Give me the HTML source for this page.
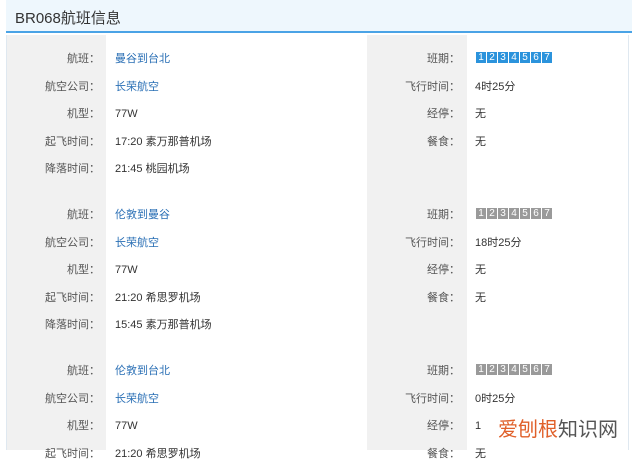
<!DOCTYPE html>
<html><head><meta charset="utf-8"><style>
*{margin:0;padding:0;box-sizing:border-box}
body{width:632px;height:450px;overflow:hidden;background:#fff;font-family:"Liberation Sans","Noto Sans CJK SC",sans-serif;position:relative}
.hd{position:absolute;left:6px;top:0;width:626px;height:33px;background:#eef7fd;border-bottom:2px solid #4aa3e6}
.hd span{position:absolute;left:9px;top:7px;font-size:15px;color:#333}
.box{position:absolute;left:6px;top:35px;width:623px;height:415px;border-left:1px solid #dfe8f0;border-right:1px solid #dfe8f0}
.g1{position:absolute;left:7px;top:35px;width:99px;height:415px;background:#f1f1f1}
.g2{position:absolute;left:367px;top:35px;width:100px;height:415px;background:#f1f1f1}
.l{position:absolute;font-size:11px;color:#555;text-align:right;width:90px;line-height:14px;margin-top:1px}
.v{position:absolute;font-size:11px;color:#333;line-height:14px;white-space:nowrap;margin-top:1px}
.b{color:#2a6fb5}
.d{position:absolute;display:flex;gap:1px}
.d i{font-style:normal;width:10px;height:11px;font-size:10px;line-height:11px;color:#fff;text-align:center}
.bl i{background:#2b93dc}.gr i{background:#9a9a9a}
.wm{position:absolute;left:498px;top:418px;font-size:20px;line-height:24px;white-space:nowrap}
</style></head><body>
<div class="hd"><span>BR068航班信息</span></div>
<div class="box"></div><div class="g1"></div><div class="g2"></div>

<div class="l" style="left:10px;top:51px">航班：</div><div class="v b" style="left:115px;top:51px">曼谷到台北</div>
<div class="l" style="left:10px;top:79px">航空公司：</div><div class="v b" style="left:115px;top:79px">长荣航空</div>
<div class="l" style="left:10px;top:106px">机型：</div><div class="v" style="left:115px;top:106px">77W</div>
<div class="l" style="left:10px;top:134px">起飞时间：</div><div class="v" style="left:115px;top:134px">17:20 素万那普机场</div>
<div class="l" style="left:10px;top:161px">降落时间：</div><div class="v" style="left:115px;top:161px">21:45 桃园机场</div>
<div class="l" style="left:370px;top:51px">班期：</div><div class="d bl" style="left:476px;top:52px"><i>1</i><i>2</i><i>3</i><i>4</i><i>5</i><i>6</i><i>7</i></div>
<div class="l" style="left:370px;top:79px">飞行时间：</div><div class="v" style="left:475px;top:79px">4时25分</div>
<div class="l" style="left:370px;top:106px">经停：</div><div class="v" style="left:475px;top:106px">无</div>
<div class="l" style="left:370px;top:134px">餐食：</div><div class="v" style="left:475px;top:134px">无</div>

<div class="l" style="left:10px;top:207px">航班：</div><div class="v b" style="left:115px;top:207px">伦敦到曼谷</div>
<div class="l" style="left:10px;top:235px">航空公司：</div><div class="v b" style="left:115px;top:235px">长荣航空</div>
<div class="l" style="left:10px;top:262px">机型：</div><div class="v" style="left:115px;top:262px">77W</div>
<div class="l" style="left:10px;top:290px">起飞时间：</div><div class="v" style="left:115px;top:290px">21:20 希思罗机场</div>
<div class="l" style="left:10px;top:317px">降落时间：</div><div class="v" style="left:115px;top:317px">15:45 素万那普机场</div>
<div class="l" style="left:370px;top:207px">班期：</div><div class="d gr" style="left:476px;top:208px"><i>1</i><i>2</i><i>3</i><i>4</i><i>5</i><i>6</i><i>7</i></div>
<div class="l" style="left:370px;top:235px">飞行时间：</div><div class="v" style="left:475px;top:235px">18时25分</div>
<div class="l" style="left:370px;top:262px">经停：</div><div class="v" style="left:475px;top:262px">无</div>
<div class="l" style="left:370px;top:290px">餐食：</div><div class="v" style="left:475px;top:290px">无</div>

<div class="l" style="left:10px;top:363px">航班：</div><div class="v b" style="left:115px;top:363px">伦敦到台北</div>
<div class="l" style="left:10px;top:391px">航空公司：</div><div class="v b" style="left:115px;top:391px">长荣航空</div>
<div class="l" style="left:10px;top:418px">机型：</div><div class="v" style="left:115px;top:418px">77W</div>
<div class="l" style="left:10px;top:446px">起飞时间：</div><div class="v" style="left:115px;top:446px">21:20 希思罗机场</div>
<div class="l" style="left:370px;top:363px">班期：</div><div class="d gr" style="left:476px;top:364px"><i>1</i><i>2</i><i>3</i><i>4</i><i>5</i><i>6</i><i>7</i></div>
<div class="l" style="left:370px;top:391px">飞行时间：</div><div class="v" style="left:475px;top:391px">0时25分</div>
<div class="l" style="left:370px;top:418px">经停：</div><div class="v" style="left:475px;top:418px">1</div>
<div class="l" style="left:370px;top:446px">餐食：</div><div class="v" style="left:475px;top:446px">无</div>

<div class="wm"><span style="color:#e0602a">爱刨根</span><span style="color:#555">知识网</span></div>
</body></html>
